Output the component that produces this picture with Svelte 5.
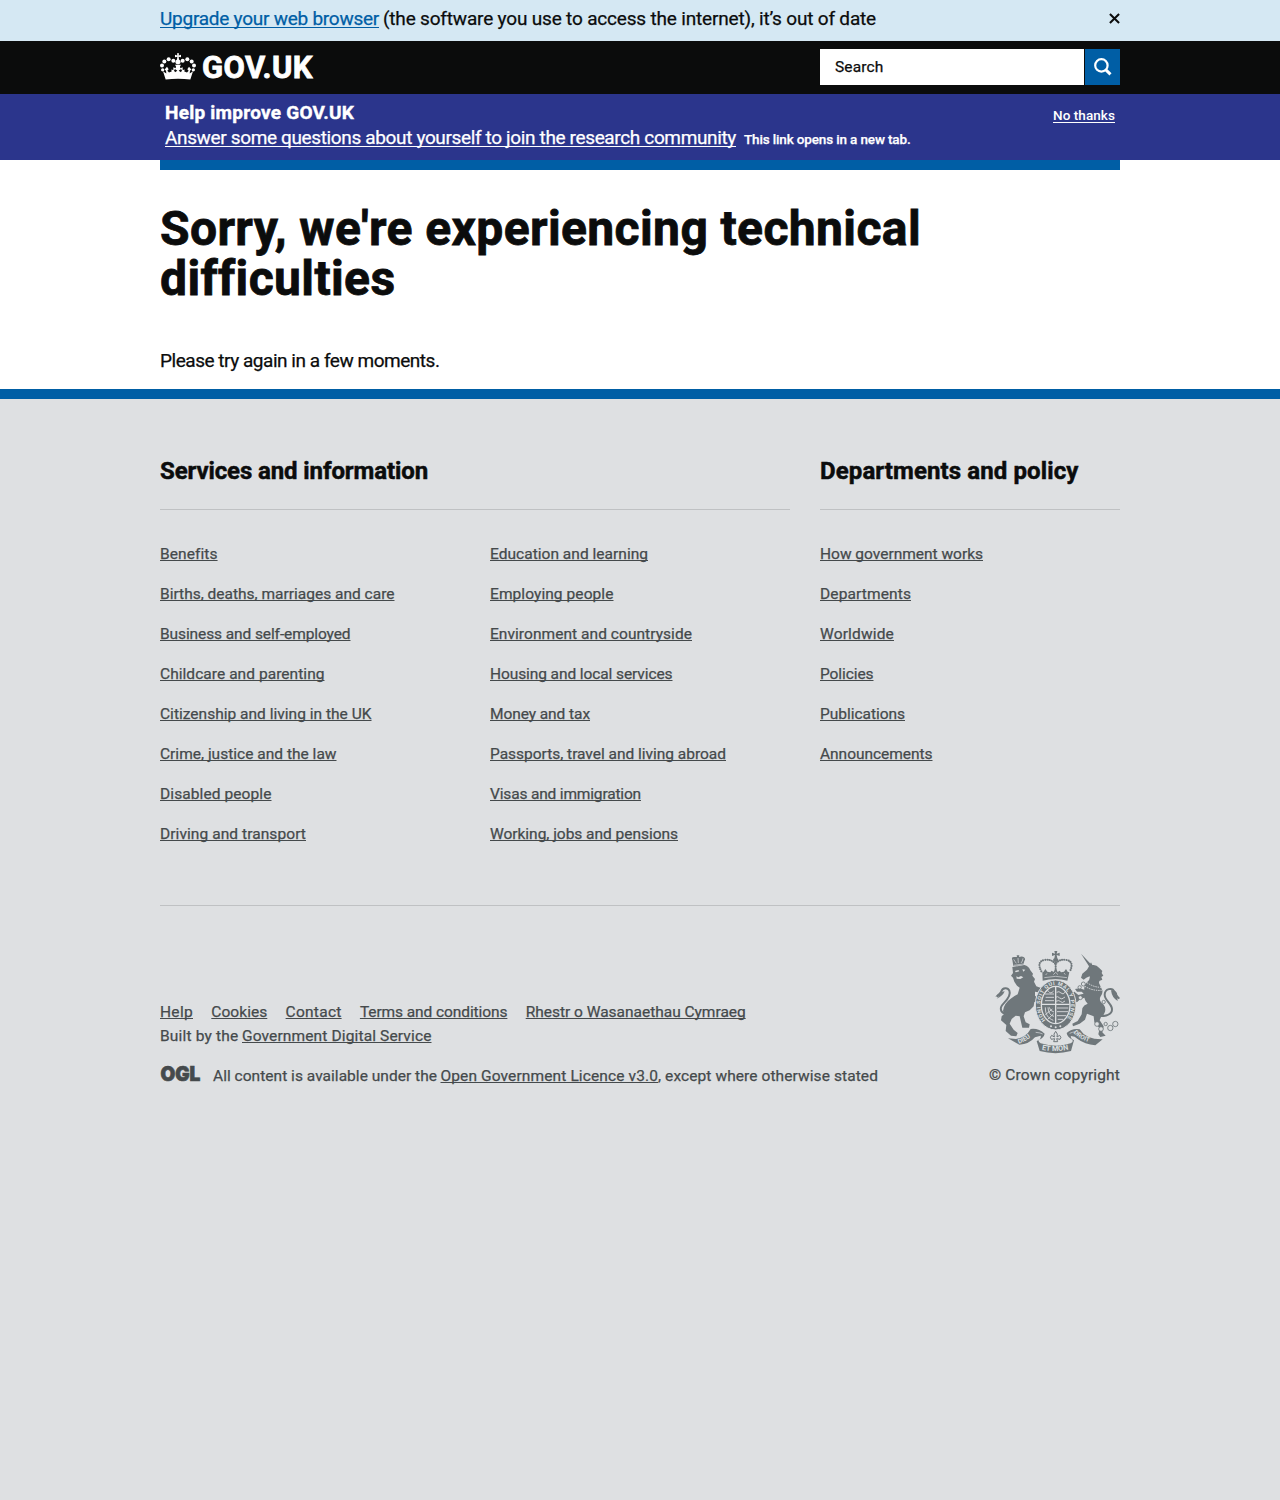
<script>
  const columns = [
    [
      ['Benefits', 57], ['Births, deaths, marriages and care', 234.5], ['Business and self-employed', 190.5],
      ['Childcare and parenting', 164.5], ['Citizenship and living in the UK', 211.5], ['Crime, justice and the law', 176.5],
      ['Disabled people', 111.5], ['Driving and transport', 146]
    ],
    [
      ['Education and learning', 158], ['Employing people', 123.5], ['Environment and countryside', 202],
      ['Housing and local services', 182.5], ['Money and tax', 100], ['Passports, travel and living abroad', 236],
      ['Visas and immigration', 151], ['Working, jobs and pensions', 188]
    ]
  ];
  const policy = [
    ['How government works', 163], ['Departments', 91], ['Worldwide', 74], ['Policies', 53.5],
    ['Publications', 85], ['Announcements', 112.5]
  ];
  const meta = [
    ['Help', 33], ['Cookies', 56], ['Contact', 56], ['Terms and conditions', 147.5], ['Rhestr o Wasanaethau Cymraeg', 220]
  ];

  // Tracks a run of text so that it sets to the given measure.
  function fit(node, width) {
    const natural = node.getBoundingClientRect().width;
    node.style.letterSpacing = `${(width - natural) / node.textContent.length}px`;
  }
</script>

{#snippet links(items)}
  <ul>
    {#each items as [label, width]}
      <li><a href="#top" use:fit={width}>{label}</a></li>
    {/each}
  </ul>
{/snippet}

<div class="upgrade">
  <div class="wrap">
    <p><a href="#top" use:fit={219}>Upgrade your web browser</a><span class="rest" use:fit={493}>(the software you use to access the internet), it’s out of date</span></p>
    <svg class="close" viewBox="0 0 12 12" role="img" aria-label="Close"><path d="M1 1 11 11M11 1 1 11" /></svg>
  </div>
</div>

<header>
  <div class="wrap">
    <a class="logo" href="#top">
      <svg viewBox="16 24 108 80" aria-hidden="true">
        <path d="M67 24h6l-1 7 7-2v7l-7-1 1 8c6 3 7 11 0 14h-6c-7-3-6-11 0-14l1-8-7 1v-7l7 2z" />
        <circle cx="56" cy="47" r="6" /><circle cx="42" cy="42" r="6" /><circle cx="29" cy="49" r="6" /><circle cx="22" cy="61" r="6" /><circle cx="24" cy="74" r="5" />
        <circle cx="84" cy="47" r="6" /><circle cx="98" cy="42" r="6" /><circle cx="111" cy="49" r="6" /><circle cx="118" cy="61" r="6" /><circle cx="116" cy="74" r="5" />
        <path d="M25 78l10 7-1-8-4-4 7-8 5 7-4 5 5 5 8-3-1-6 8 2 3 6 7-4-6-5-6 3v-9l7 3 1-5-3-5h18l-3 5 1 5 7-3v9l-6-3-6 5 7 4 3-6 8-2-1 6 8 3 5-5-4-5 5-7 7 8-4 4-1 8 10-7-8 25c-24-3-50-3-74 0z" />
      </svg>
      <span use:fit={111}>GOV.UK</span>
    </a>
    <form>
      <div class="field"><span use:fit={48.5}>Search</span></div>
      <div class="go"><svg viewBox="0 0 18 18" role="img" aria-label="Search"><circle cx="7.4" cy="7.4" r="6.2" /><path d="m11.9 11.9 4.6 4.4" /></svg></div>
    </form>
  </div>
</header>

<section class="survey">
  <div class="wrap">
    <div>
      <h2><span use:fit={189}>Help improve GOV.UK</span></h2>
      <p><a href="#top" use:fit={571}>Answer some questions about yourself to join the research community</a><small use:fit={166.5}>This link opens in a new tab.</small></p>
    </div>
    <a class="dismiss" href="#top" use:fit={62}>No thanks</a>
  </div>
</section>

<main>
  <div class="wrap">
    <h1><span use:fit={761}>Sorry, we're experiencing technical</span><span use:fit={233}>difficulties</span></h1>
    <p><span use:fit={279.5}>Please try again in a few moments.</span></p>
  </div>
</main>

<footer>
  <div class="wrap">
    <div class="nav">
      <section>
        <h2><span use:fit={268}>Services and information</span></h2>
        <div class="cols">
          {#each columns as items}{@render links(items)}{/each}
        </div>
      </section>
      <section>
        <h2><span use:fit={258.5}>Departments and policy</span></h2>
        {@render links(policy)}
      </section>
    </div>
    <div class="base">
      <div class="legal">
        <nav>{#each meta as [label, width]}<a href="#top" use:fit={width}>{label}</a>{/each}</nav>
        <p><span use:fit={78.5}>Built by the</span><a class="after" href="#top" use:fit={189.5}>Government Digital Service</a></p>
        <div class="licence">
          <svg viewBox="0 0 41 18" role="img" aria-label="OGL"><text x=".4" y="16.3" textLength="40" lengthAdjust="spacingAndGlyphs">OGL</text></svg>
          <p><span use:fit={224}>All content is available under the</span><a class="after" href="#top" use:fit={217.5}>Open Government Licence v3.0</a><span use:fit={220}>, except where otherwise stated</span></p>
        </div>
      </div>
      <div class="crown">
        <svg viewBox="30 18 375 306" aria-hidden="true">
          <defs>
            <path id="garter" d="M182 225.500A46 60 0 1 1 242 225.500" />
            <path id="dieu" d="M101 296Q130 288 151 263" />
            <path id="mon" d="M170 314Q212 323 257 312" />
            <path id="droit" d="M265 263Q289 289 331 296" />
          </defs>
          <!-- lion -->
          <path d="M82 45q-4-9 5-9h9l-1-5h8l-1 5q10-4 15 1 6 5 1 11l-3 11-30 4z" />
          <path class="cut thin" d="M86 43q5 8 8 12m5-16 1 15m14-14q-1 9-6 14M86 61l30-4" />
          <path d="M82 66L118 60Q132 64 136 76L144 86L142 92L150 102L147 110L154 124L166 128L172 138L160 142L150 140L150 152L160 160L176 166L172 176L158 176L148 170L146 184L134 196L120 202L116 214L122 232L134 238L132 248L112 248L104 214L92 212L80 222L74 236L86 254L98 264L94 274L78 272L62 258L64 240L48 226L50 214L58 206L54 198Q56 176 76 162Q90 152 98 148L104 128L96 122L88 110L84 98L78 92L84 84Z" />
          <path class="cut fill" d="M90 78l10-3 3 4-11 3zm22-5 9 1-6 6zm-18 21 6 3 8-4 7 4-9 5-11-1z" />
          <path class="tail" d="M72 206c-25 2-32-15-16-31 17-17 22-27 17-38-5-11-20-9-24 2q-4 11-13 16" />
          <path d="M31 155q6-8 14-13l14-3q-6 15-24 22l8-8z" />
          <!-- unicorn -->
          <path d="M288 26L318 58L312 64ZM313 62L318 52L322 60Q334 58 342 68L352 78L350 84L355 92L349 96L352 104L343 108L342 114L352 136Q354 146 346 156Q342 166 350 174Q364 184 360 200Q357 212 348 216L344 226L356 244L352 262L362 272L346 276L340 268L344 250L328 232L326 214Q312 208 306 206L300 224L284 236L264 244L262 236L278 228L290 208L292 190Q296 180 308 176Q300 168 298 158L286 162L276 172L266 168L270 158L258 152L256 144L268 140L280 150L296 146L290 140L276 140L270 132L284 130L298 134Q296 120 306 112Q316 104 314 94L304 98L296 104L288 98L292 86L306 74Z" />
          <path class="cut dotted" d="M306 113q20 14 42 14M300 124q22 14 50 12" />
          <path class="tail" d="M348 213c23 0 37-10 32-26-5-14-22-23-21-39 1-17 23-22 29-8 3 9 7 17 15 20" />
          <path d="M378 136q19 0 19 14l7 11-7-2 1 9q-17-9-20-32z" />
          <g class="chain"><circle cx="284" cy="127" r="5" /><circle cx="295" cy="117" r="6" /><circle cx="286" cy="158" r="6" /><circle cx="356" cy="171" r="5" /><circle cx="336" cy="237" r="7" /><circle cx="348" cy="252" r="7" /><circle cx="376" cy="249" r="8" /><circle cx="391" cy="237" r="8" /><circle cx="362" cy="237" r="5" /></g>
          <!-- central crown -->
          <path d="M208 18h9l-2 8 9-3v10l-9-3 2 10q5 3 2 10h-13q-4-7 2-10l2-10-9 3V23l9 3z" />
          <path class="beads" d="M169 79q-15-29 9-34 22-4 33 12 12-16 34-12 23 5 10 34M212 46v34" />
          <path d="M172 82l4-2 5-8 6 8 9 2 4-5 6 4 6-12 6 12 6-4 4 5 9-2 6-8 5 8 5 2-6 25q-36-8-74 0z" />
          <path class="cut thin" d="M178 98q34-8 68 0M182 90l4-5m19 4 7-7 7 7m22 0-4-5" />
          <!-- shield and garter -->
          <ellipse class="rim" cx="212" cy="180" rx="61" ry="75" />
          <ellipse class="cut" cx="212" cy="180" rx="43" ry="56" />
          <path class="cut" d="M212 125v111M170 178h84" />
          <path class="detail" d="M180 147h27m-25 10h25m-27 10h27m-25-28q8-5 11 2t13-3m9 4q7-5 13 2t13-3m-30 16q8-5 13 2t16-3m-28 13q11-5 15 1t13-2M216 189h34m-34 11h33m-33 12h28m-26 11h17M181 187c0 23 9 33 24 39m-16-39q1 24 18 27m-14-27q1 11 14 14m-26 8 21-17m-14 31 18-17" />
          <text class="motto small"><textPath href="#garter" textLength="258">HONI SOIT QUI MAL Y PENSE</textPath></text>
          <circle class="cut fill" cx="198" cy="244" r="3" /><circle class="cut fill" cx="212" cy="247" r="3" /><circle class="cut fill" cx="226" cy="244" r="3" />
          <!-- ribbon -->
          <path d="M69 280l24 2q31-6 44-30 24-3 42 14-3 14-18 18-2 7 6 11 47 14 90 0 9-4 5-11-15-7-17-20 17-15 39-11 19 31 69 30l-22 18q-32-3-53-19-8-9-20-9-3 8 9 13l-9 32q-46 13-94 0l-9-30q15-5 12-16l-17 5q-18 21-47 22z" />
          <path class="cut thin" d="M152 262q14 1 21 5m81-2q9-4 17-5" />
          <path class="lily" d="M212 259q-8 8-4 17l-8-5q-7 6-1 12l10-2-3 9h12l-3-9 10 2q6-6-1-12l-8 5q4-9-4-17z" />
          <text class="motto"><textPath href="#dieu">DIEU</textPath></text>
          <text class="motto big"><textPath href="#mon">ET MON</textPath></text>
          <text class="motto"><textPath href="#droit">DROIT</textPath></text>
        </svg>
        <a href="#top" use:fit={131}>© Crown copyright</a>
      </div>
    </div>
  </div>
</footer>

<style>
  :global(body) { background: #dee0e2; font-family: Roboto, "Liberation Sans", sans-serif; color: #0b0c0c; }
  .wrap { width: 960px; margin: 0 auto; }
  p, h1, h2, ul { margin: 0; padding: 0; }
  p { -webkit-text-stroke: .25px; }
  li { list-style: none; }
  a, span, small { display: inline-block; white-space: nowrap; }
  a { color: inherit; text-decoration: underline; text-decoration-thickness: 1px; text-underline-offset: 2px; text-decoration-skip-ink: none; }

  .upgrade { height: 41px; background: #d5e8f3; font-size: 19px; line-height: 25px; }
  .upgrade .wrap { display: flex; justify-content: space-between; padding-top: 6px; }
  .upgrade a { color: #005ea5; }
  .rest { margin-left: 4px; }
  .close { width: 11px; height: 11px; margin-top: 7px; fill: none; stroke: #0b0c0c; stroke-width: 2.2; }

  header { background: #0b0c0c; height: 53px; }
  header .wrap { display: flex; justify-content: space-between; }
  .logo { display: flex; gap: 6px; color: #fff; text-decoration: none; font-size: 31px; font-weight: 700; line-height: 36px; padding-top: 9px; -webkit-text-stroke: .8px #fff; }
  .logo svg { width: 36px; height: 27px; margin-top: 3px; fill: #fff; }
  form { display: flex; width: 300px; height: 36px; margin-top: 8px; gap: 1px; }
  .field { flex: 1; background: #fff; padding-left: 15px; font-size: 15.500px; line-height: 36px; -webkit-text-stroke: .25px; }
  .go { width: 35px; background: #005ea5; display: flex; align-items: center; justify-content: center; }
  .go svg { width: 18px; height: 18px; fill: none; stroke: #fff; stroke-width: 2.2; }
  .go path { stroke-width: 3; }

  .survey { height: 66px; background: #2b358c; color: #fff; }
  .survey .wrap { display: flex; justify-content: space-between; padding: 6px 5px 0; box-sizing: border-box; }
  .survey h2 { font-size: 19px; line-height: 25px; -webkit-text-stroke: .4px; }
  .survey p { font-size: 19px; line-height: 25px; }
  small { margin-left: 8px; font-size: 13.500px; font-weight: 500; }
  .dismiss { font-size: 13.500px; line-height: 20px; margin-top: 5px; height: 20px; font-weight: 500; }

  main { height: 229px; background: #fff; }
  main .wrap { border-top: 10px solid #005ea5; }
  h1 { display: flex; flex-direction: column; align-items: flex-start; padding-top: 34px; font-size: 48px; line-height: 50px; font-weight: 700; -webkit-text-stroke: .8px; }
  main p { margin-top: 44px; font-size: 19px; line-height: 25px; }

  footer { border-top: 10px solid #005ea5; padding-top: 57px; font-size: 15.500px; line-height: 20px; color: #454a4c; }
  footer a { text-underline-offset: 1px; -webkit-text-stroke: .25px; }
  .nav { display: grid; grid-template-columns: 630px 300px; gap: 30px; height: 449px; border-bottom: 1px solid #bfc1c3; }
  footer h2 { height: 53px; border-bottom: 1px solid #bfc1c3; color: #0b0c0c; font-size: 24px; line-height: 31px; -webkit-text-stroke: .5px; }
  .cols { display: grid; grid-template-columns: 300px 300px; gap: 30px; }
  ul { padding-top: 34px; }
  li { height: 20px; margin-bottom: 20px; }
  .base { display: flex; justify-content: space-between; padding-top: 45px; }
  .legal { padding-top: 51px; }
  nav { display: flex; gap: 18.300px; }
  .legal > p { margin-top: 4px; }
  .after { margin-left: 3.500px; }
  .licence { display: flex; gap: 12px; margin-top: 20px; }
  .licence svg { width: 41px; height: 18px; margin-top: -1px; overflow: visible; }
  .licence svg text { font: 900 20.500px Inter, sans-serif; fill: #454a4c; stroke: #454a4c; stroke-width: .7px; }
  .crown { display: flex; flex-direction: column; align-items: flex-end; }
  .crown svg { width: 125px; height: 102px; fill: #6f777b; overflow: visible; }
  .crown a { margin-top: 12px; text-decoration: none; }
  .crown .cut { fill: none; stroke: #dee0e2; stroke-width: 4; }
  .crown .thin { stroke-width: 2; }
  .crown .fill { fill: #dee0e2; stroke: none; }
  .crown .dotted { stroke-width: 3; stroke-dasharray: 4 3; }
  .rim { stroke: #dee0e2; stroke-width: 3; }
  .tail { fill: none; stroke: #6f777b; stroke-width: 6; }
  .beads { fill: none; stroke: #6f777b; stroke-width: 6.500; stroke-linecap: round; stroke-dasharray: 0 6.500; }
  .detail { fill: none; stroke: #dee0e2; stroke-width: 2.600; }
  .chain circle { fill: #dee0e2; stroke: #6f777b; stroke-width: 2.500; }
  .lily { fill: none; stroke: #6f777b; stroke-width: 3; }
  .motto { font: 700 19px Roboto, sans-serif; fill: #dee0e2; }
  .big { font-size: 22px; }
  .small { font-size: 16px; }
</style>
